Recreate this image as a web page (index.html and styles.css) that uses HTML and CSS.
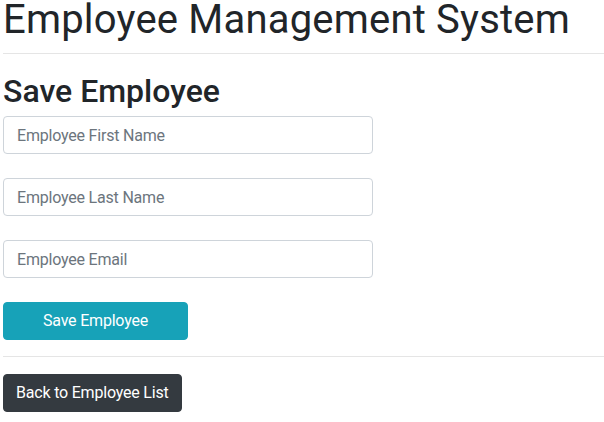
FILE: index.html
```html
<!DOCTYPE html>
<html>
<head>
<meta charset="utf-8">
<link rel="stylesheet" href="styles.css">
</head>
<body>
<div class="page">
  <h1 class="title">Employee Management System</h1>
  <hr class="rule">
  <h2 class="subtitle">Save Employee</h2>
  <form class="form">
    <input class="field" type="text" placeholder="Employee First Name">
    <input class="field" type="text" placeholder="Employee Last Name">
    <input class="field" type="email" placeholder="Employee Email">
    <button class="btn btn-info" type="button">Save Employee</button>
  </form>
  <hr class="rule rule-lower">
  <button class="btn btn-dark" type="button">Back to Employee List</button>
</div>
</body>
</html>
```

FILE: styles.css
```css
html, body {
  margin: 0;
  padding: 0;
  background: #fff;
}
body {
  font-family: Roboto, "Noto Sans", sans-serif;
  color: #212529;
  font-size: 16px;
}
.page {
  padding: 0 0 0 3px;
  overflow: hidden;
  white-space: nowrap;
}
.title {
  margin: 0;
  font-size: 40px;
  font-weight: 400;
  line-height: 40px;
  letter-spacing: 0.2px;
}
.rule {
  border: 0;
  border-top: 1px solid #e5e5e5;
  margin: 13px 0 0 0;
}
.subtitle {
  margin: 17px 0 0 0;
  font-size: 32px;
  font-weight: 500;
  line-height: 40px;
}
.form {
  display: flex;
  flex-direction: column;
  align-items: flex-start;
  gap: 24px;
  margin-top: 5px;
}
.field {
  box-sizing: border-box;
  width: 370px;
  height: 38px;
  padding: 6px 13px;
  border: 1px solid #ced4da;
  border-radius: 4px;
  font-family: inherit;
  font-size: 16px;
  letter-spacing: -0.2px;
  color: #495057;
  background: #fff;
  margin: 0;
}
.field::placeholder {
  color: #6c757d;
}
.btn {
  box-sizing: border-box;
  height: 38px;
  padding: 6px 12px;
  border: 1px solid transparent;
  border-radius: 4px;
  font-family: inherit;
  font-size: 16px;
  letter-spacing: -0.2px;
  line-height: 24px;
  color: #fff;
  margin: 0;
}
.btn-info {
  width: 185px;
  background: #17a2b8;
  border-color: #17a2b8;
}
.rule-lower {
  margin-top: 16px;
}
.btn-dark {
  display: block;
  margin-top: 17px;
  background: #343a40;
  border-color: #343a40;
}
```
